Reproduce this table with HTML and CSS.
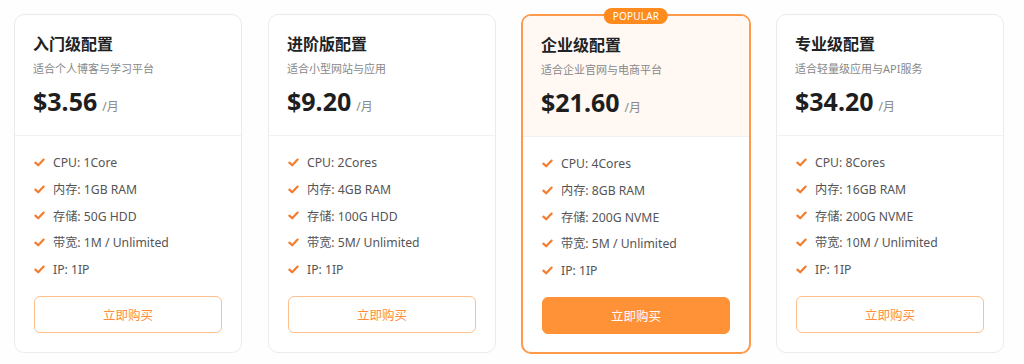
FILE: index.html
```html
<!DOCTYPE html>
<html lang="zh-CN">
<head>
<meta charset="utf-8">
<title>Pricing</title>
<link rel="stylesheet" href="styles.css">
</head>
<body>
<div class="plans">
  <div class="card">
    <div class="head">
      <h3 class="title">入门级配置</h3>
      <p class="desc">适合个人博客与学习平台</p>
      <div class="price"><span class="amount">$3.56</span><span class="unit">/月</span></div>
    </div>
    <ul class="features">
      <li><svg class="check" viewBox="0 0 12 12"><polyline points="1.5,6.2 4.6,9 10.5,2.8"/></svg>CPU: 1Core</li>
      <li><svg class="check" viewBox="0 0 12 12"><polyline points="1.5,6.2 4.6,9 10.5,2.8"/></svg>内存: 1GB RAM</li>
      <li><svg class="check" viewBox="0 0 12 12"><polyline points="1.5,6.2 4.6,9 10.5,2.8"/></svg>存储: 50G HDD</li>
      <li><svg class="check" viewBox="0 0 12 12"><polyline points="1.5,6.2 4.6,9 10.5,2.8"/></svg>带宽: 1M / Unlimited</li>
      <li><svg class="check" viewBox="0 0 12 12"><polyline points="1.5,6.2 4.6,9 10.5,2.8"/></svg>IP: 1IP</li>
    </ul>
    <a class="btn" href="#">立即购买</a>
  </div>
  <div class="card">
    <div class="head">
      <h3 class="title">进阶版配置</h3>
      <p class="desc">适合小型网站与应用</p>
      <div class="price"><span class="amount">$9.20</span><span class="unit">/月</span></div>
    </div>
    <ul class="features">
      <li><svg class="check" viewBox="0 0 12 12"><polyline points="1.5,6.2 4.6,9 10.5,2.8"/></svg>CPU: 2Cores</li>
      <li><svg class="check" viewBox="0 0 12 12"><polyline points="1.5,6.2 4.6,9 10.5,2.8"/></svg>内存: 4GB RAM</li>
      <li><svg class="check" viewBox="0 0 12 12"><polyline points="1.5,6.2 4.6,9 10.5,2.8"/></svg>存储: 100G HDD</li>
      <li><svg class="check" viewBox="0 0 12 12"><polyline points="1.5,6.2 4.6,9 10.5,2.8"/></svg>带宽: 5M/ Unlimited</li>
      <li><svg class="check" viewBox="0 0 12 12"><polyline points="1.5,6.2 4.6,9 10.5,2.8"/></svg>IP: 1IP</li>
    </ul>
    <a class="btn" href="#">立即购买</a>
  </div>
  <div class="card featured">
    <span class="badge">POPULAR</span>
    <div class="head">
      <h3 class="title">企业级配置</h3>
      <p class="desc">适合企业官网与电商平台</p>
      <div class="price"><span class="amount">$21.60</span><span class="unit">/月</span></div>
    </div>
    <ul class="features">
      <li><svg class="check" viewBox="0 0 12 12"><polyline points="1.5,6.2 4.6,9 10.5,2.8"/></svg>CPU: 4Cores</li>
      <li><svg class="check" viewBox="0 0 12 12"><polyline points="1.5,6.2 4.6,9 10.5,2.8"/></svg>内存: 8GB RAM</li>
      <li><svg class="check" viewBox="0 0 12 12"><polyline points="1.5,6.2 4.6,9 10.5,2.8"/></svg>存储: 200G NVME</li>
      <li><svg class="check" viewBox="0 0 12 12"><polyline points="1.5,6.2 4.6,9 10.5,2.8"/></svg>带宽: 5M / Unlimited</li>
      <li><svg class="check" viewBox="0 0 12 12"><polyline points="1.5,6.2 4.6,9 10.5,2.8"/></svg>IP: 1IP</li>
    </ul>
    <a class="btn btn-solid" href="#">立即购买</a>
  </div>
  <div class="card">
    <div class="head">
      <h3 class="title">专业级配置</h3>
      <p class="desc">适合轻量级应用与API服务</p>
      <div class="price"><span class="amount">$34.20</span><span class="unit">/月</span></div>
    </div>
    <ul class="features">
      <li><svg class="check" viewBox="0 0 12 12"><polyline points="1.5,6.2 4.6,9 10.5,2.8"/></svg>CPU: 8Cores</li>
      <li><svg class="check" viewBox="0 0 12 12"><polyline points="1.5,6.2 4.6,9 10.5,2.8"/></svg>内存: 16GB RAM</li>
      <li><svg class="check" viewBox="0 0 12 12"><polyline points="1.5,6.2 4.6,9 10.5,2.8"/></svg>存储: 200G NVME</li>
      <li><svg class="check" viewBox="0 0 12 12"><polyline points="1.5,6.2 4.6,9 10.5,2.8"/></svg>带宽: 10M / Unlimited</li>
      <li><svg class="check" viewBox="0 0 12 12"><polyline points="1.5,6.2 4.6,9 10.5,2.8"/></svg>IP: 1IP</li>
    </ul>
    <a class="btn" href="#">立即购买</a>
  </div>
</div>
</body>
</html>
```

FILE: styles.css
```css
* { box-sizing: border-box; }
html, body { margin: 0; padding: 0; }
body {
  background: #fefefe;
  font-family: "Noto Sans", "Noto Sans CJK SC", sans-serif;
  color: #222;
  width: 1024px;
  height: 364px;
  overflow: hidden;
}
.plans {
  display: grid;
  grid-template-columns: repeat(4, 228px);
  column-gap: 26px;
  padding: 14px 20px 0 14px;
  align-items: start;
}
.card {
  position: relative;
  background: #fff;
  border: 1px solid #ebebeb;
  border-radius: 10px;
  display: flex;
  flex-direction: column;
  height: 339px;
}
.featured {
  border: 2px solid #ff9a4a;
  margin: 0 -1px 0 -1px;
  height: 340px;
}
.featured .head { background: #fff8f3; border-radius: 8px 8px 0 0; }
.badge {
  position: absolute;
  top: -8px;
  left: 50%;
  transform: translateX(-50%);
  background: #ff8a1e;
  color: #fff;
  font-size: 10px;
  line-height: 16px;
  height: 16px;
  padding: 0 9px;
  border-radius: 8px;
  letter-spacing: 0.2px;
}
.head {
  padding: 18px 18px 18px;
  border-bottom: 1px solid #f2f2f2;
}
.title {
  margin: 0;
  font-size: 16px;
  line-height: 22px;
  font-weight: 700;
  color: #222;
}
.desc {
  margin: 5px 0 0;
  font-size: 11px;
  line-height: 18px;
  color: #888;
}
.price {
  margin-top: 7px;
  display: flex;
  align-items: baseline;
  gap: 5px;
}
.amount {
  font-size: 25px;
  line-height: 32px;
  font-weight: 700;
  color: #1e1e1e;
}
.unit {
  font-size: 12px;
  color: #888;
}
.features {
  list-style: none;
  margin: 0;
  padding: 13px 18px 0;
}
.features li {
  display: flex;
  align-items: center;
  height: 26.7px;
  font-size: 12.2px;
  color: #555;
}
.check {
  width: 11px;
  height: 11px;
  margin: 0 8px 0 1px;
  fill: none;
  stroke: #f47c2e;
  stroke-width: 2.4;
  stroke-linecap: round;
  stroke-linejoin: round;
}
.btn {
  margin: 14px 19px 0;
  height: 37px;
  display: flex;
  align-items: center;
  justify-content: center;
  border: 1px solid #ffbf8a;
  border-radius: 6px;
  color: #ff8c3a;
  font-size: 12.5px;
  text-decoration: none;
}
.btn-solid {
  background: #ff9236;
  border-color: #ff9236;
  color: #fff;
}
```
